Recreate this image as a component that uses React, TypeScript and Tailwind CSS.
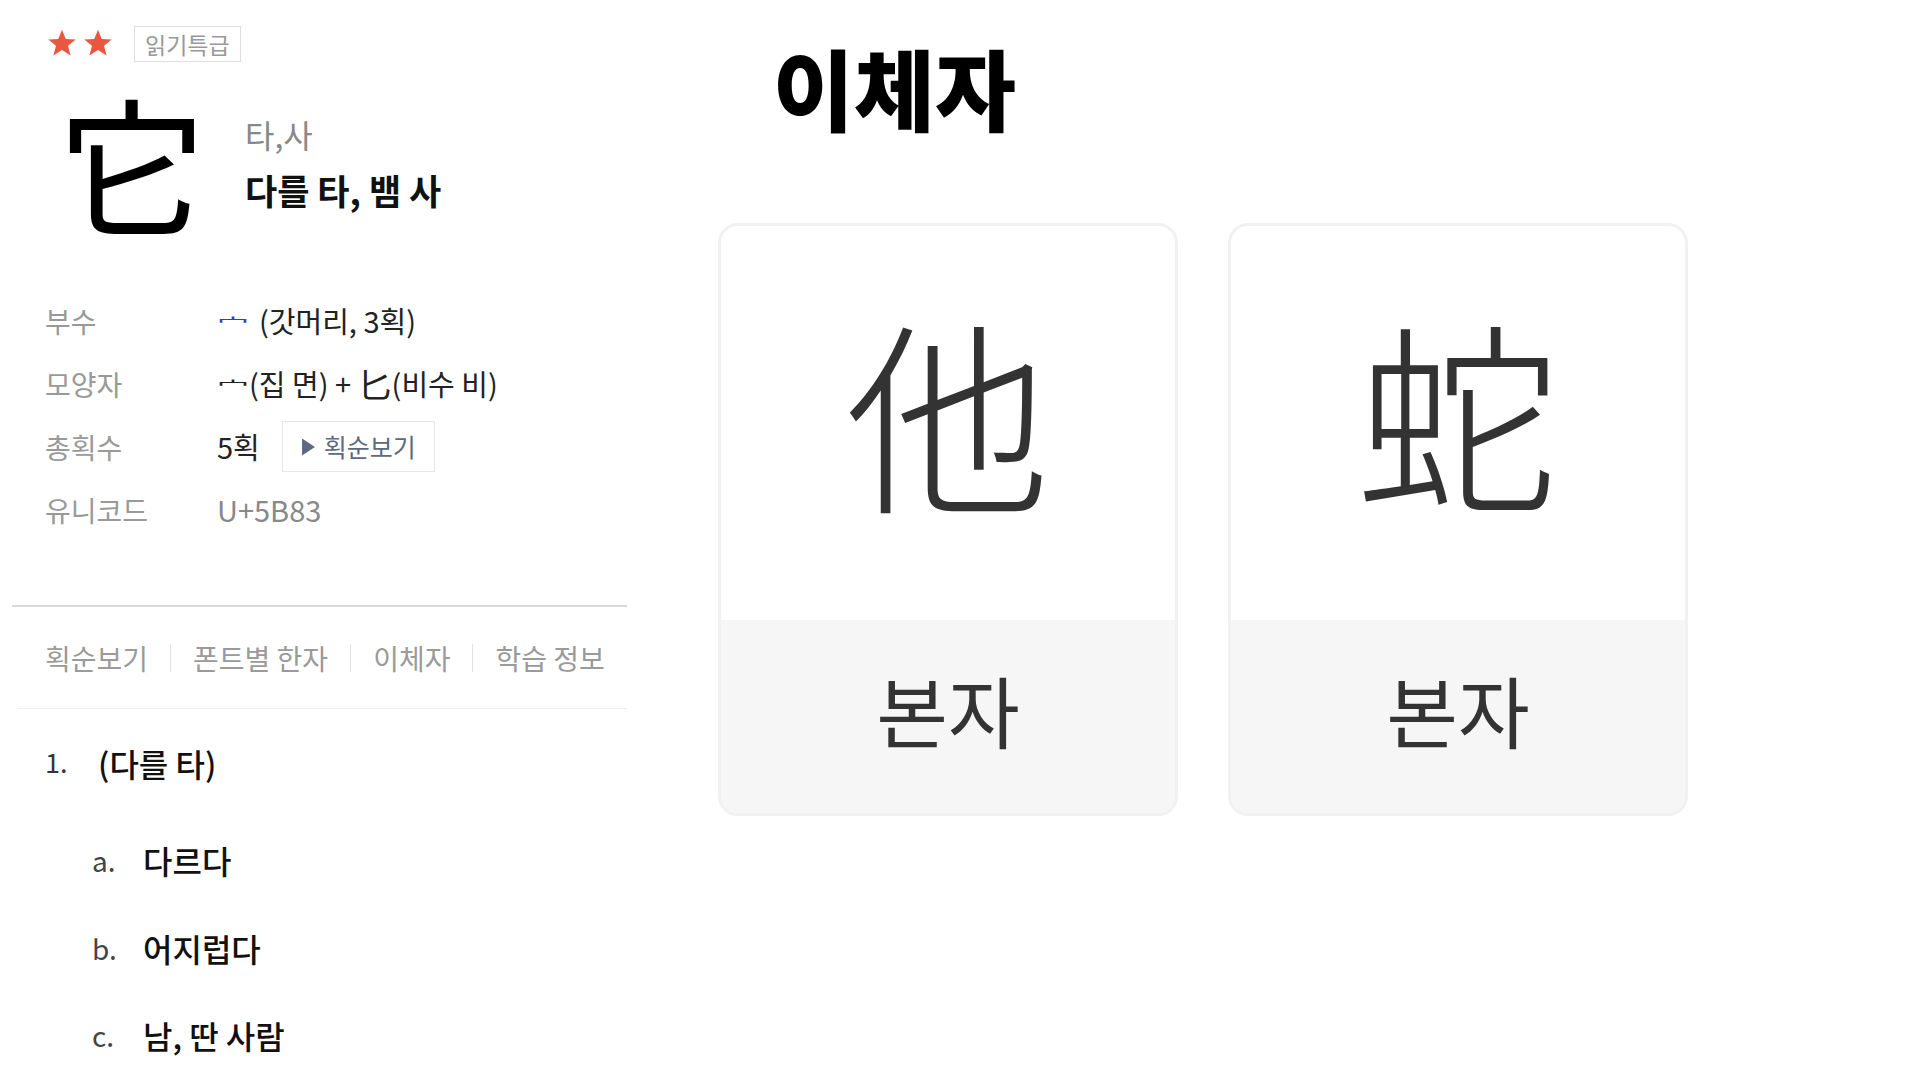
import React from "react";

const Star = () => (
  <svg width="32" height="30" viewBox="0 0 24 23" fill="#e9573f">
    <path d="M12 0.5l2.9 7.1 7.6.4-5.9 4.9 2 7.4L12 16.1l-6.6 4.2 2-7.4L1.5 8l7.6-.4z" />
  </svg>
);

const Flat = ({ children, className = "" }: any) => (
  <span className={"inline-block origin-center scale-y-[0.45] " + className}>{children}</span>
);

export default function App() {
  const rows = [
    {
      label: "부수",
      value: (
        <span className="flex items-center text-[#222]">
          <Flat className="mr-[10px] text-[32px] text-[#2747b8]">宀</Flat>(갓머리, 3획)
        </span>
      ),
    },
    {
      label: "모양자",
      value: (
        <span className="flex items-center text-[#222]">
          <Flat className="text-[32px]">宀</Flat>(집 면)&nbsp;+&nbsp;<span className="text-[34px]">匕</span>(비수 비)
        </span>
      ),
    },
    {
      label: "총획수",
      value: (
        <span className="flex items-center text-[#222]">
          5획
          <span className="ml-[22px] flex h-[51px] items-center border border-[#e6e6e6] px-[18px] text-[25px] text-[#5b6a80]">
            <svg width="15" height="20" viewBox="0 0 14 18" className="mr-[8px]">
              <path d="M1 1 L13 9 L1 17 Z" fill="#5b6a80" />
            </svg>
            획순보기
          </span>
        </span>
      ),
    },
    { label: "유니코드", value: <span className="text-[#888]">U+5B83</span> },
  ];

  const tabs = ["획순보기", "폰트별 한자", "이체자", "학습 정보"];

  const items = [
    { k: "a.", t: "다르다" },
    { k: "b.", t: "어지럽다" },
    { k: "c.", t: "남, 딴 사람" },
  ];

  return (
    <div className="flex h-[1079px] w-[1920px] overflow-hidden bg-white font-['Noto_Sans_CJK_KR','Noto_Sans',sans-serif] text-black">
      {/* left */}
      <div className="flex w-[627px] shrink-0 flex-col">
        <div className="ml-[46px] mt-[26px] flex h-[36px] items-center">
          <div className="flex gap-[4px]">
            <Star />
            <Star />
          </div>
          <span className="ml-[20px] flex h-[36px] items-center border border-[#dedede] px-[10px] text-[23px] leading-[30px] text-[#999]">
            읽기특급
          </span>
        </div>

        <div className="ml-[57px] mt-[24px] flex">
          <div className="text-[150px] leading-none">它</div>
          <div className="ml-[38px] flex flex-col pt-[30px]">
            <div className="text-[32px] leading-[36px] text-[#888]">타,사</div>
            <div className="mt-[19px] text-[35px] font-bold leading-[38px] text-[#111]">다를 타, 뱀 사</div>
          </div>
        </div>

        <div className="ml-[45px] mt-[53px] flex flex-col">
          {rows.map((r) => (
            <div key={r.label} className="flex h-[63px] items-center text-[29px]">
              <span className="w-[172px] text-[28px] text-[#999]">{r.label}</span>
              {r.value}
            </div>
          ))}
        </div>

        <div className="ml-[12px] mt-[64px] h-[2px] bg-[#d9d9d9]" />

        <div className="flex h-[104px] items-center pl-[45px] text-[28px] text-[#9a9a9a]">
          {tabs.map((t, i) => (
            <React.Fragment key={t}>
              {i > 0 && <span className="mx-[22px] h-[28px] w-px bg-[#e2e2e2]" />}
              <span>{t}</span>
            </React.Fragment>
          ))}
        </div>

        <div className="ml-[17px] h-px bg-[#eeeeee]" />

        <div className="flex h-[110px] items-center pl-[45px] text-[32px]">
          <span className="w-[53px] text-[27px] text-[#333]">1.</span>
          <span className="font-medium text-[#111]">(다를 타)</span>
        </div>
        {items.map((it) => (
          <div key={it.k} className="flex h-[90px] items-center pl-[92px] text-[32px]">
            <span className="w-[51px] text-[28px] text-[#444]">{it.k}</span>
            <span className="font-medium text-[#111]">{it.t}</span>
          </div>
        ))}
      </div>

      {/* right */}
      <div className="ml-[91px] flex flex-col">
        <h1 className="ml-[55px] mt-[42px] text-[88px] font-black leading-none text-black">이체자</h1>
        <div className="mt-[93px] flex gap-[50px]">
          {["他", "蛇"].map((c) => (
            <div
              key={c}
              className="flex h-[593px] w-[460px] flex-col overflow-hidden rounded-[20px] border-[3px] border-[#f1f1f1] bg-white"
            >
              <div className="flex h-[394px] items-center justify-center pb-[30px] text-[205px] font-light leading-none text-[#333]">
                {c}
              </div>
              <div className="flex flex-1 items-center justify-center bg-[#f6f6f6] pb-[16px] text-[78px] leading-none text-[#333]">
                본자
              </div>
            </div>
          ))}
        </div>
      </div>
    </div>
  );
}
